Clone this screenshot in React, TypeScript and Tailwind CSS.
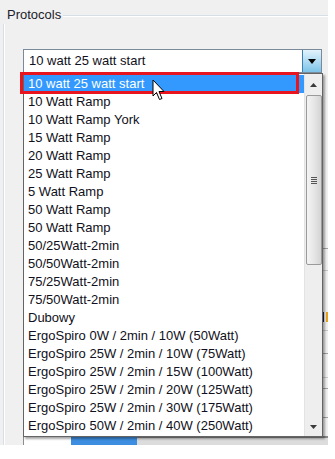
import React from "react";

// Win7 style combo box with its open drop-down list
const items = [
  "10 watt 25 watt start",
  "10 Watt Ramp",
  "10 Watt Ramp York",
  "15 Watt Ramp",
  "20 Watt Ramp",
  "25 Watt Ramp",
  "5 Watt Ramp",
  "50 Watt Ramp",
  "50 Watt Ramp",
  "50/25Watt-2min",
  "50/50Watt-2min",
  "75/25Watt-2min",
  "75/50Watt-2min",
  "Dubowy",
  "ErgoSpiro 0W / 2min / 10W (50Watt)",
  "ErgoSpiro 25W / 2min / 10W (75Watt)",
  "ErgoSpiro 25W / 2min / 15W (100Watt)",
  "ErgoSpiro 25W / 2min / 20W (125Watt)",
  "ErgoSpiro 25W / 2min / 30W (175Watt)",
  "ErgoSpiro 50W / 2min / 40W (250Watt)",
];

const font = { fontFamily: '"Liberation Sans", Arial, sans-serif' };

const Cursor = () => (
  <svg width="14" height="22" viewBox="0 0 14 22" className="absolute left-[128px] top-[5px]">
    <path
      d="M1 1 L1 17 L4.5 13.5 L7.5 20.5 L10 19.5 L7 12.5 L12 12.5 Z"
      fill="white"
      stroke="black"
      strokeWidth="1"
    />
  </svg>
);

const ScrollBar = () => (
  <div className="w-[18px] bg-[#eeeeee] border-l border-[#e3e3e3] flex flex-col items-center">
    <div className="h-[21px] w-full flex items-center justify-center">
      <svg width="7" height="4" viewBox="0 0 7 4">
        <path d="M0 4 L3.5 0 L7 4 Z" fill="#3a3a3a" />
      </svg>
    </div>
    <div className="w-[16px] h-[170px] rounded-[2px] border border-[#9a9a9a] bg-gradient-to-r from-[#f4f4f4] via-[#e6e6e6] to-[#d4d4d4] flex items-center justify-center">
      <div className="flex flex-col gap-[1px]">
        <div className="w-[6px] h-[1px] bg-[#555]" />
        <div className="w-[6px] h-[1px] bg-[#555]" />
        <div className="w-[6px] h-[1px] bg-[#555]" />
        <div className="w-[6px] h-[1px] bg-[#555]" />
      </div>
    </div>
    <div className="flex-1" />
    <div className="h-[18px] w-full flex items-center justify-center">
      <svg width="7" height="4" viewBox="0 0 7 4">
        <path d="M0 0 L3.5 4 L7 0 Z" fill="#3a3a3a" />
      </svg>
    </div>
  </div>
);

// the form controls that lie under the open list; only their right ends show
const HiddenForm = () => (
  <div className="flex flex-col items-end">
    <div className="h-[224px]" />
    <div className="w-[10px] h-[1px] bg-[#a0a0a0]" />
    <div className="h-[21px]" />
    <div className="w-[10px] h-[1px] bg-[#c8c8c8]" />
    <div className="h-[41px]" />
    <div className="flex items-center gap-[2px] h-[10px]">
      <div className="w-[2px] h-[10px] bg-[#1a1a40]" />
      <div className="w-[2px] h-[10px] bg-[#e8a21c]" />
    </div>
    <div className="h-[8px]" />
    <div className="w-[10px] h-[1px] bg-[#c8c8c8]" />
    <div className="h-[22px]" />
    <div className="w-[10px] h-[1px] bg-[#a0a0a0]" />
    <div className="h-[23px]" />
    <div className="w-[10px] h-[1px] bg-[#c8c8c8]" />
    <div className="h-[10px]" />
    <div className="w-[10px] h-[1px] bg-[#a0a0a0]" />
    <div className="h-[28px]" />
    <div className="w-[10px] h-[1px] bg-[#a0a0a0]" />
  </div>
);

const App = () => {
  return (
    <div className="w-[335px] h-[459px] bg-white overflow-hidden" style={font}>
      <div className="w-[328px] h-[445px] bg-[#f0f0f0] overflow-hidden flex flex-col">
        {/* group box caption and frame */}
        <div className="flex items-center h-[18px] mt-[6px] pl-[5px]">
          <span className="px-[2px] text-[13px] leading-[18px] text-[#1b1b2b]">Protocols</span>
          <div className="flex-1 flex flex-col mt-[2px]">
            <div className="h-[1px] bg-[#d5dfe5]" />
            <div className="h-[1px] bg-white" />
          </div>
        </div>

        <div className="flex-1 flex ml-[3px] border-l border-[#d5dfe5]">
          <div className="flex-1 flex flex-col border-l border-white pl-[18px] pt-[25px]">
            {/* combo box */}
            <div className="relative w-[299px] z-10">
              <div className="h-[24px] bg-white border border-[#7a8a99] flex items-center">
                <div className="flex-1 pl-[5px] text-[13px] leading-[16px] text-[#101020]">10 watt 25 watt start</div>
                <div className="w-[19px] h-full border-l border-[#3c7fb1] bg-gradient-to-b from-[#e3f3fc] via-[#b0dcf3] to-[#7cc3e8] flex items-center justify-center">
                  <svg width="8" height="5" viewBox="0 0 8 5">
                    <path d="M0 0 L8 0 L4 5 Z" fill="#000" />
                  </svg>
                </div>
              </div>

              {/* open list */}
              <div className="absolute left-0 top-[24px] w-[300px] h-[364px] bg-white border border-[#646464] shadow-[2px_2px_2px_rgba(0,0,0,0.35)] flex">
                <div className="flex-1 pt-[1px] flex flex-col">
                  {items.map((item, i) => (
                    <div
                      key={i}
                      className={`h-[18px] pl-[4px] text-[13px] leading-[18px] whitespace-nowrap ${
                        i === 0 ? "bg-[#3399ff] text-white" : "text-[#101020]"
                      }`}
                    >
                      {item}
                    </div>
                  ))}
                </div>
                <ScrollBar />
                {/* red marker drawn over the first row */}
                <div className="absolute left-[-4px] top-[-2px] w-[279px] h-[22px] border-[3px] border-[#e8141e]" />
                <Cursor />
              </div>
            </div>

            <div className="flex-1" />
            {/* bottom controls peeking out below the list */}
            <div className="h-[9px] flex">
              <div className="w-[48px] h-full bg-white border-l border-t border-[#8d8d8d]" />
              <div className="w-[66px] h-full bg-[#3d8ee0] border-t border-[#2a6cb0]" />
              <div className="flex-1 h-full border-t-2 border-[#8a8a8a] bg-[#dcdcdc]" />
            </div>
          </div>
          <div className="w-0 relative">
            <div className="absolute right-0 top-0 w-[10px]">
              <HiddenForm />
            </div>
          </div>
        </div>
      </div>
    </div>
  );
};

export default App;
